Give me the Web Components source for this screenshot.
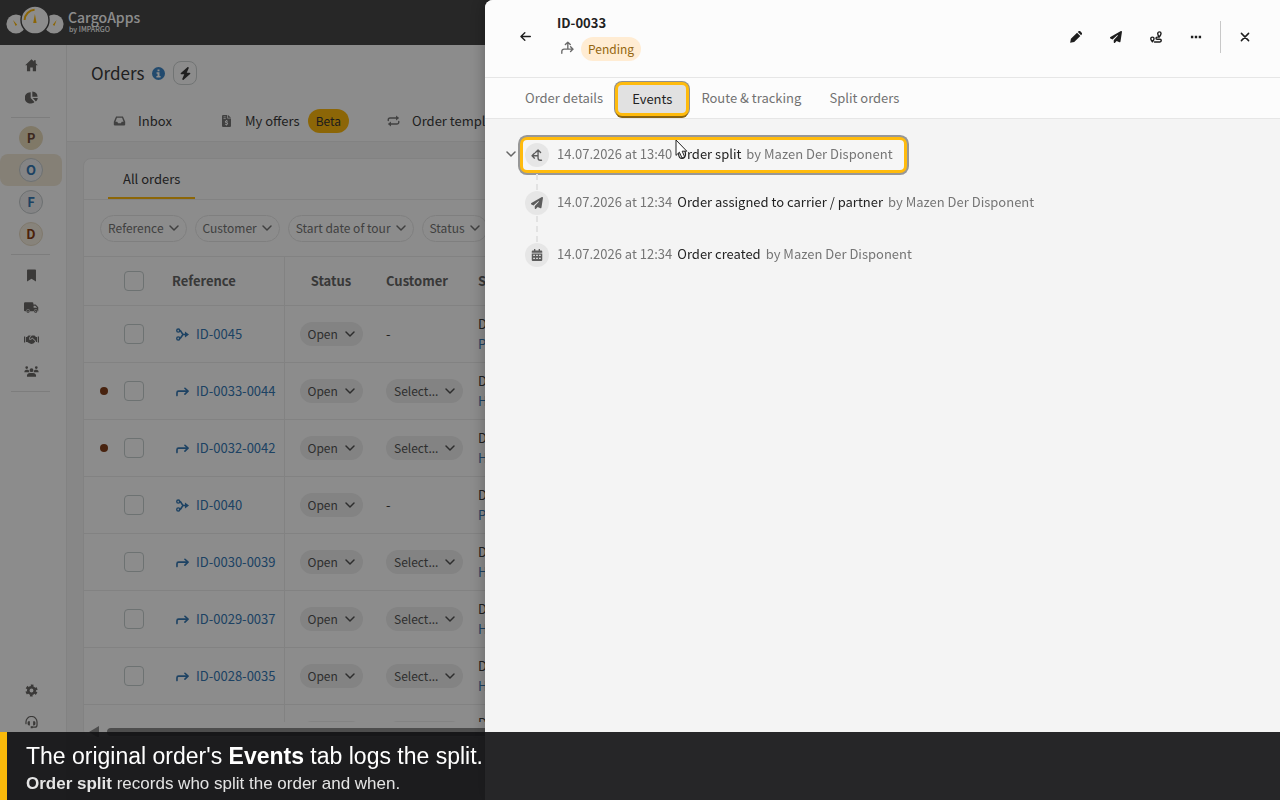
<!DOCTYPE html>
<html lang="en">
<head>
<meta charset="utf-8">
<title>CargoApps - Orders</title>
<style>
  html, body { height: 100%; }
  body {
    margin: 0;
    overflow: hidden;
    font: 13px/20px "Noto Sans CJK SC", "Noto Sans", sans-serif;
    --accent: #ffbb0d;
    --ink: #3b3b3b;
    --link: #3578b4;
    --line: #ededed;
    color: var(--ink);
  }
</style>
</head>
<body>
<cargo-app>
  <app-header slot="header"></app-header>
  <side-nav slot="nav"></side-nav>
  <orders-page slot="main"></orders-page>
  <order-drawer slot="drawer" order="ID-0033" status="Pending">
    <event-item icon="split" date="14.07.2026 at 13:40" author="Mazen Der Disponent" marked>Order split</event-item>
    <event-item icon="plane" date="14.07.2026 at 12:34" author="Mazen Der Disponent">Order assigned to carrier / partner</event-item>
    <event-item icon="calendar" date="14.07.2026 at 12:34" author="Mazen Der Disponent">Order created</event-item>
  </order-drawer>
  <caption-bar slot="caption">
    <span slot="title">The original order's <b>Events</b> tab logs the split.</span>
    <span><b>Order split</b> records who split the order and when.</span>
  </caption-bar>
</cargo-app>

<script>
const line = (d, w = 1.6) => `<path d="${d}" fill="none" stroke="currentColor" stroke-width="${w}" stroke-linecap="round" stroke-linejoin="round"/>`;
const fill = (d) => `<path d="${d}" fill="currentColor" fill-rule="evenodd"/>`;

const ICONS = {
  home: ["0 0 16 16", fill("M8 .4L.2 7.6H2.4V15H6.4V10.5H9.6V15H13.6V7.6H15.8L13.2 5.2V1.6H11V3.2Z")],
  pie: ["0 0 16 16", fill("M7 1.5V8.6L11.6 13.4A7 7 0 1 1 7 1.5ZM9 0.5A7 7 0 0 1 15.5 7H9ZM9.6 8.5H15.8A7 7 0 0 1 13.4 12.8Z")],
  bookmark: ["0 0 16 16", fill("M2.5 1.5A1 1 0 0 1 3.5 .5H12.5A1 1 0 0 1 13.5 1.5V15.5L8 12L2.5 15.5Z")],
  truck: ["0 0 20 16", fill("M1.5 1H11A1.5 1.5 0 0 1 12.5 2.5V4H15.5L19 7.5V13H18.2A2.6 2.6 0 0 0 13 13H8A2.6 2.6 0 0 0 2.8 13H1.5A1.5 1.5 0 0 1 0 11.5V2.5A1.5 1.5 0 0 1 1.5 1ZM12.8 5.6V8.4H17.3V8L14.9 5.6ZM5.4 10.9A2.1 2.1 0 1 1 5.4 15.1A2.1 2.1 0 0 1 5.4 10.9ZM5.4 12.2A.8.8 0 1 0 5.4 13.8A.8.8 0 0 0 5.4 12.2ZM15.6 10.9A2.1 2.1 0 1 1 15.6 15.1A2.1 2.1 0 0 1 15.6 10.9ZM15.6 12.2A.8.8 0 1 0 15.6 13.8A.8.8 0 0 0 15.6 12.2Z")],
  handshake: ["0 0 20 16", fill("M0 4H1.6V12H0ZM18.4 4H20V12H18.4ZM2.6 4.6H4L6 2.8H9L7 5.2V8.2H9.4L11 6.6L15.2 10.6L12.5 13.2L9.6 14L6.6 12.6L4.4 11.2H2.6ZM17.4 4.6H16L14 2.8H10.4L8.2 5.4V7.2H9L11 5.4L16 10V11.2H17.4Z")],
  people: ["0 0 20 16", fill("M3.6 1A1.8 1.8 0 1 1 3.6 4.6A1.8 1.8 0 0 1 3.6 1ZM16.4 1A1.8 1.8 0 1 1 16.4 4.6A1.8 1.8 0 0 1 16.4 1ZM10 3.6A2.6 2.6 0 1 1 10 8.8A2.6 2.6 0 0 1 10 3.6ZM2.6 5.6H5.2L6.4 6.4A4 4 0 0 0 7.4 9H0.4A3.4 3.4 0 0 1 2.6 5.6ZM17.4 5.6H14.8L13.6 6.4A4 4 0 0 1 12.6 9H19.6A3.4 3.4 0 0 0 17.4 5.6ZM8 10H12A4 4 0 0 1 16 15H4A4 4 0 0 1 8 10Z")],
  gear: ["0 0 16 16", `<circle cx="8" cy="8" r="4" fill="none" stroke="currentColor" stroke-width="3.2"/><circle cx="8" cy="8" r="6.2" fill="none" stroke="currentColor" stroke-width="2.6" stroke-dasharray="3.25 3.25" stroke-dashoffset="-1.6"/>`],
  headset: ["0 0 16 16", line("M1.2 9.4V7.4A6.8 6.8 0 0 1 14.8 7.4V11A2.8 2.8 0 0 1 12 13.8H8.5", 1.5) + fill("M4 6.4H6V11.6H5A1.8 1.8 0 0 1 3.2 9.8V8.2A1.8 1.8 0 0 1 4 6.4ZM12 6.4H10V11.6H11A1.8 1.8 0 0 0 12.8 9.8V8.2A1.8 1.8 0 0 0 12 6.4ZM7 12.6H9.5V15H7Z")],
  info: ["0 0 16 16", fill("M8 0A8 8 0 1 1 8 16A8 8 0 0 1 8 0ZM6.8 3V5.2H9.2V3ZM5.6 6.4V8.2H6.8V11.2H5.4V13H10.6V11.2H9.2V6.4Z")],
  bolt: ["0 0 448 512", fill("M349.4 44.6c5.9-13.7 1.5-29.7-10.6-38.5s-28.6-8-39.9 1.8l-256 224c-10 8.8-13.6 22.9-8.9 35.3S50.7 288 64 288H175.5L98.6 467.4c-5.9 13.7-1.5 29.7 10.6 38.5s28.6 8 39.9-1.8l256-224c10-8.8 13.6-22.9 8.9-35.3s-16.6-20.7-30-20.7H272.5L349.4 44.6z")],
  inbox: ["0 0 16 16", fill("M3.4 2H12.6L15.6 9V12.5A1.5 1.5 0 0 1 14.1 14H1.9A1.5 1.5 0 0 1 .4 12.5V9ZM4.6 3.8L2.6 9H5L6.2 11H9.8L11 9H13.4L11.4 3.8Z")],
  invoice: ["0 0 12 16", fill("M1.5 0H7V4.6H12V14.5A1.5 1.5 0 0 1 10.5 16H1.5A1.5 1.5 0 0 1 0 14.5V1.5A1.5 1.5 0 0 1 1.5 0ZM8 0L12 3.8H8ZM2 2V3H5V2ZM2 4V5H5V4ZM5.4 6.6V7.4C3.4 7.8 3.4 10.2 5.2 10.7L6.4 11.1C7 11.4 6.8 12 6 12L3.9 11.6V12.8L5.4 13.2V14H6.6V13.2C8.8 12.8 8.7 10.4 6.8 9.8L5.6 9.4C5 9.1 5.3 8.6 6 8.6L7.8 8.9V7.7L6.6 7.4V6.6Z")],
  repeat: ["0 0 16 16", line("M1 7.4V6.4A2.4 2.4 0 0 1 3.4 4H13", 1.9) + line("M15 8.6V9.6A2.4 2.4 0 0 1 12.6 12H3", 1.9) + fill("M11.4.6L15.6 4L11.4 7.4ZM4.6 8.6L.4 12L4.6 15.4Z")],
  chevron: ["0 0 12 12", line("M2 4L6 8L10 4", 1.5)],
  merge: ["0 0 16 16", line("M4.4 3.2C7.4 3.2 6.6 8 9.6 8H12M4.4 12.8C7.4 12.8 6.6 8 9.6 8", 2) + `<circle cx="2.8" cy="3.2" r="1.9" fill="none" stroke="currentColor" stroke-width="1.7"/><circle cx="2.8" cy="12.8" r="1.9" fill="none" stroke="currentColor" stroke-width="1.7"/>` + fill("M11 4.4L16 8L11 11.6Z")],
  turn: ["0 0 16 16", line("M1.2 13V9.6A2 2 0 0 1 3.2 7.6H14", 2) + line("M11 4L14.8 7.6L11 11.2", 2)],
  back: ["0 0 16 16", line("M15 8H1.8M7 2.4L1.4 8L7 13.6", 2)],
  branch: ["0 0 16 16", line("M1 15V12.8A2.8 2.8 0 0 1 3.8 10H14.8M11.8 7L14.8 10L11.8 13M8.4 10V1.6M5.4 4.4L8.4 1.4L11.4 4.4", 1.7)],
  split: ["0 0 16 16", line("M14 15H12.4A3 3 0 0 1 9.4 12V1.6M6 4.6L9.4 1.4L12.8 4.6M9 9H1.6M4.6 5.8L1.4 9L4.6 12.2", 1.8)],
  pencil: ["0 0 16 16", fill("M1.2 10.4L9.4 2.2L13.8 6.6L5.6 14.8L.2 15.8ZM10.4 1.2L11.4.4A1.8 1.8 0 0 1 13.8.4L15.6 2.2A1.8 1.8 0 0 1 15.6 4.6L14.8 5.6Z")],
  plane: ["0 0 512 512", fill("M498.1 5.6c10.1 7 15.4 19.1 13.5 31.2l-64 416c-1.5 9.7-7.4 18.2-16 23s-18.9 5.4-28 1.6L284 427.7l-68.5 74.1c-8.9 9.7-22.9 12.9-35.2 8.1S160 493.2 160 480V396.4c0-4 1.5-7.8 4.2-10.7L331.8 202.8c5.8-6.3 5.6-16-.4-22s-15.7-6.4-22-.7L106 360.8 17.7 316.6C7.1 311.3 .3 300.7 0 288.9s5.9-22.8 16.1-28.7l448-256c10.7-6.1 23.9-5.5 34 1.4z")],
  route: ["0 0 16 16", line("M12.4 8C11 6.4 10.3 5.2 10.3 3.4A2.2 2.2 0 0 1 14.7 3.4C14.7 5 13.8 6.4 12.4 8ZM3.2 14.4C1.8 12.8 1 11.8 1 10.4A2.2 2.2 0 0 1 5.4 10.4C5.4 11.8 4.6 12.8 3.2 14.4ZM11 8.2H9.4A1.4 1.4 0 0 0 9.4 11H13.2A1.7 1.7 0 0 1 13.2 14.6H6", 1.9)],
  dots: ["0 0 16 16", fill("M1.2 6.4H4.4V9.6H1.2ZM6.4 6.4H9.6V9.6H6.4ZM11.6 6.4H14.8V9.6H11.6Z")],
  close: ["0 0 16 16", line("M3.2 3.2L12.8 12.8M12.8 3.2L3.2 12.8", 2)],
  calendar: ["0 0 16 16", fill("M4 0H5.8V2H10.2V0H12V2H13.6A1.4 1.4 0 0 1 15 3.4V5H1V3.4A1.4 1.4 0 0 1 2.4 2H4ZM1 6H15V14.6A1.4 1.4 0 0 1 13.6 16H2.4A1.4 1.4 0 0 1 1 14.6ZM3 7.6V9.4H5.2V7.6ZM6.9 7.6V9.4H9.1V7.6ZM10.8 7.6V9.4H13V7.6ZM3 11.6V13.4H5.2V11.6ZM6.9 11.6V13.4H9.1V11.6ZM10.8 11.6V13.4H13V11.6Z")],
};

class UiIcon extends HTMLElement {
  connectedCallback() {
    const [box, body] = ICONS[this.getAttribute("name")];
    this.attachShadow({ mode: "open" }).innerHTML = `
      <style>
        :host { display: inline-block; width: 12px; height: 12px; flex: none; }
        svg { display: block; width: 100%; height: 100%; }
      </style>
      <svg viewBox="${box}" aria-hidden="true">${body}</svg>
    `;
  }
}
customElements.define("ui-icon", UiIcon);

class CargoApp extends HTMLElement {
  constructor() {
    super();
    this.attachShadow({ mode: "open" }).innerHTML = `
      <style>
        :host { display: flex; flex-direction: column; height: 100vh; }
        .body { display: flex; flex: 1; min-height: 0; }
        ::slotted([slot="main"]) { flex: 1; min-width: 0; }
        .backdrop { position: fixed; inset: 0; background: rgba(0, 0, 0, 0.45); }
      </style>
      <slot name="header"></slot>
      <div class="body">
        <slot name="nav"></slot>
        <slot name="main"></slot>
      </div>
      <div class="backdrop"></div>
      <slot name="drawer"></slot>
      <slot name="caption"></slot>
    `;
  }
}
customElements.define("cargo-app", CargoApp);

class AppHeader extends HTMLElement {
  constructor() {
    super();
    this.attachShadow({ mode: "open" }).innerHTML = `
      <style>
        :host { display: flex; align-items: center; gap: 4px; height: 45px; padding: 0 6px; box-sizing: border-box; background: #474747; color: #fff; }
        svg { width: 58px; height: 38px; }
        .brand { padding-bottom: 4px; }
        .name { font-size: 14px; line-height: 16px; font-weight: 500; }
        .by { font-size: 7px; line-height: 8px; padding-left: 1px; font-weight: 500; }
      </style>
      <svg viewBox="0 0 58 38" aria-hidden="true">
        <g fill="#fff">
          <circle cx="10" cy="20" r="9.6"/><circle cx="48" cy="20" r="9.6"/>
          <circle cx="29" cy="16" r="14" stroke="#474747" stroke-width="1.4"/>
        </g>
        <path d="M18.6 16A10.5 10.5 0 0 1 28.6 5.8" fill="none" stroke="#ffbb0d" stroke-width="2"/>
        <path d="M28.9 10L30.6 19H27.2ZM7 16L11.2 20.8L9.6 22ZM50.6 16L48.4 22L46.8 20.8Z" fill="#ffbb0d"/>
      </svg>
      <div class="brand">
        <div class="name">CargoApps</div>
        <div class="by">by IMPARGO</div>
      </div>
    `;
  }
}
customElements.define("app-header", AppHeader);

class SideNav extends HTMLElement {
  connectedCallback() {
    const link = (icon, label) => `<a href="#${icon}" aria-label="${label}"><ui-icon name="${icon}"></ui-icon></a>`;
    const wide = (icon, label) => `<a href="#${icon}" aria-label="${label}"><ui-icon class="wide" name="${icon}"></ui-icon></a>`;
    const board = (letter, cls) => `<a href="#${letter}" class="${cls}"><span>${letter}</span></a>`;

    this.attachShadow({ mode: "open" }).innerHTML = `
      <style>
        :host { display: flex; width: 66px; padding: 4px 0 62px; border-right: 1px solid var(--line); background: #fff; box-sizing: content-box; }
        nav { display: flex; flex-direction: column; width: 62px; }
        a { display: grid; place-content: center; height: 32px; border-radius: 8px; color: #6a6866; text-decoration: none; }
        ui-icon { width: 13px; height: 13px; }
        .wide { width: 15px; }
        hr { width: 39px; margin: 4px 11px; border: 0; border-top: 1px solid #e4e4e4; }
        span { display: grid; place-content: center; width: 22px; height: 22px; border: 1px solid #ccd4d4; border-radius: 50%; font-weight: 700; }
        .p span { background: #eadcbc; border-color: #eadcbc; color: #6e4a3a; }
        .o { background: #f2e9d8; }
        .o span, .f span { background: #f0f1f3; color: var(--link); border-color: #c6cccd; }
        .d span { background: #f6eee0; border-color: #e8dcc6; color: #8a3c12; }
        .end { margin-top: auto; }
      </style>
      <nav>
        ${link("home", "Home")}
        ${link("pie", "Dashboard")}
        <hr>
        ${board("P", "p")}
        ${board("O", "o")}
        ${board("F", "f")}
        ${board("D", "d")}
        <hr>
        ${link("bookmark", "Bookmarks")}
        ${wide("truck", "Fleet")}
        ${wide("handshake", "Partners")}
        ${wide("people", "Team")}
        <hr>
        <div class="end">
          ${link("gear", "Settings")}
          ${link("headset", "Support")}
        </div>
      </nav>
    `;
  }
}
customElements.define("side-nav", SideNav);

// drop-down in the shape of a pill
class PillSelect extends HTMLElement {
  connectedCallback() {
    const value = this.getAttribute("value");
    this.attachShadow({ mode: "open" }).innerHTML = `
      <style>
        :host { display: inline-grid; align-items: center; height: 24px; border-radius: 12px; background: #efefef; color: #555; vertical-align: middle; }
        select { grid-area: 1 / 1; appearance: none; height: 24px; margin: 0; padding: 0 24px 0 8px; border: 0; background: none; color: inherit; font: inherit; font-size: 12px; line-height: 24px; }
        ui-icon { grid-area: 1 / 1; justify-self: end; margin-right: 7px; pointer-events: none; }
      </style>
      <select aria-label="${this.getAttribute("label")}"><option>${value}</option></select>
      <ui-icon name="chevron"></ui-icon>
    `;
  }
}
customElements.define("pill-select", PillSelect);

class OrdersPage extends HTMLElement {
  connectedCallback() {
    const orders = [
      ["ID-0045", "merge"],
      ["ID-0033-0044", "turn", true],
      ["ID-0032-0042", "turn", true],
      ["ID-0040", "merge"],
      ["ID-0030-0039", "turn"],
      ["ID-0029-0037", "turn"],
      ["ID-0028-0035", "turn"],
      ["", "turn"],
    ];

    this.attachShadow({ mode: "open" }).innerHTML = `
      <style>
        :host { display: flex; flex-direction: column; background: #f6f6f6; }
        a { color: inherit; text-decoration: none; }
        .top { padding: 14px 24px 0; background: #fff; border-bottom: 1px solid var(--line); }
        h1 { display: flex; align-items: center; gap: 8px; height: 28px; margin: 0; font-size: 17px; font-weight: 400; }
        h1 ui-icon { width: 13px; height: 13px; color: #3f88c8; }
        .quick { display: grid; place-content: center; width: 24px; height: 24px; padding: 0; border: 1px solid #ced3d3; border-radius: 8px; background: #fff; color: var(--ink); }
        .quick ui-icon { color: inherit; }
        .sections { display: flex; gap: 38px; height: 32px; padding: 18px 22px 4px; align-items: center; white-space: nowrap; }
        .sections a { display: flex; align-items: center; gap: 12px; min-width: 69px; height: 24px; }
        .sections ui-icon { color: #777; width: 13px; }
        .beta { padding: 2px 8px; margin-left: -4px; border-radius: 12px; background: var(--accent); color: #333; font-size: 12px; }
        .card { flex: 1; min-height: 0; display: flex; flex-direction: column; margin: 16px 16px 62px; border: 1px solid var(--line); border-radius: 8px; background: #fff; overflow: hidden; }
        .views { flex: none; display: flex; height: 40px; padding: 0 24px; border-bottom: 1px solid var(--line); }
        .views a { padding: 10px 15px 8px; border-bottom: 2px solid var(--accent); }
        .filters { display: flex; gap: 8px; padding: 15px 16px 14px; }
        .filters button { flex: none; display: flex; align-items: center; gap: 4px; height: 27px; padding: 0 6px 2px 7px; border: 1px solid #e8e8e8; border-radius: 14px; background: #fff; color: #757575; font: inherit; font-size: 12px; }
        .scroll { flex: 1; min-height: 0; overflow: hidden; border-top: 1px solid var(--line); }
        table { table-layout: fixed; width: 100%; border-collapse: separate; border-spacing: 0; }
        th, td { padding: 0; height: 56px; border-bottom: 1px solid var(--line); text-align: left; }
        th { height: 48px; color: #666; font-weight: 700; }
        .dot { width: 40px; text-align: center; }
        .dot i { display: block; width: 8px; height: 8px; margin-left: 16px; border-radius: 50%; background: #84401c; }
        .pick { width: 48px; }
        .ref { width: 112px; border-right: 1px solid var(--line); }
        td.ref a { display: flex; align-items: center; gap: 7px; padding-left: 4px; color: var(--link); }
        .ref ui-icon { width: 13px; height: 13px; }
        .status { width: 92px; text-align: center; }
        .cust { width: 92px; padding-left: 9px; }
        .stop a { color: var(--link); }
        input { display: block; appearance: none; width: 20px; height: 20px; margin: 0; border: 1px solid #c6cfcf; border-radius: 4px; background: #fff; }
        .bar { flex: none; display: flex; align-items: center; gap: 8px; height: 15px; padding-left: 5px; }
        .bar i { border: 6px solid transparent; border-right: 10px solid #8c8c8c; border-left: 0; margin-top: 4px; }
        .bar b { flex: 1; height: 8px; margin-top: 4px; border-radius: 4px; background: #8c8c8c; }
      </style>
      <div class="top">
        <h1>Orders <ui-icon name="info"></ui-icon>
          <button class="quick" aria-label="Quick actions"><ui-icon name="bolt"></ui-icon></button>
        </h1>
        <nav class="sections">
          <a href="#inbox"><ui-icon name="inbox"></ui-icon>Inbox</a>
          <a href="#offers"><ui-icon name="invoice"></ui-icon>My offers <span class="beta">Beta</span></a>
          <a href="#templates"><ui-icon name="repeat"></ui-icon>Order templates</a>
        </nav>
      </div>
      <section class="card">
        <div class="views"><a href="#all">All orders</a></div>
        <div class="filters">
          ${["Reference", "Customer", "Start date of tour", "Status"].map((f) => `<button>${f}<ui-icon name="chevron"></ui-icon></button>`).join("")}
        </div>
        <div class="scroll">
          <table>
            <thead>
              <tr>
                <th class="dot"></th>
                <th class="pick"><input type="checkbox" aria-label="Select all orders"></th>
                <th class="ref">Reference</th>
                <th class="status">Status</th>
                <th class="cust">Customer</th>
                <th class="stop">Start</th>
              </tr>
            </thead>
            <tbody>
              ${orders.map(([id, icon, fresh]) => `
                <tr>
                  <td class="dot">${fresh ? "<i></i>" : ""}</td>
                  <td class="pick"><input type="checkbox" aria-label="Select ${id}"></td>
                  <td class="ref">${id ? `<a href="#${id}"><ui-icon name="${icon}"></ui-icon>${id}</a>` : ""}</td>
                  <td class="status"><pill-select label="Status of ${id}" value="Open"></pill-select></td>
                  <td class="cust">${icon === "merge" ? "-" : `<pill-select label="Customer of ${id}" value="Select..."></pill-select>`}</td>
                  <td class="stop">D<br>${id ? `<a href="#stop">${icon === "merge" ? "P" : "H"}</a>` : "&nbsp;"}</td>
                </tr>`).join("")}
            </tbody>
          </table>
        </div>
        <div class="bar"><i></i><b></b></div>
      </section>
    `;
  }
}
customElements.define("orders-page", OrdersPage);

class OrderDrawer extends HTMLElement {
  connectedCallback() {
    this.attachShadow({ mode: "open" }).innerHTML = `
      <style>
        :host { position: fixed; top: 0; right: 0; bottom: 0; left: 485px; display: flex; flex-direction: column; border-radius: 8px 0 0 0; background: #f4f4f4; color: #222; box-shadow: 0 0 16px rgba(0, 0, 0, 0.3); }
        header { display: flex; align-items: center; height: 77px; padding: 0 15px 4px 20px; box-sizing: border-box; border-radius: 8px 0 0 0; background: #fcfcfc; }
        button { display: grid; place-content: center; width: 40px; height: 40px; padding: 0; border: 0; background: none; color: #1e1e1e; font: inherit; }
        .title { flex: 1; padding: 0 12px; }
        h2 { margin: 0; font-size: 13px; line-height: 20px; font-weight: 700; }
        .state { display: flex; align-items: center; gap: 7px; height: 24px; margin: 4px 0 0 4px; color: #6a6a6a; }
        .state ui-icon { width: 13px; height: 13px; margin-bottom: 2px; }
        .pill { padding: 2px 7px; border-radius: 12px; background: #ffecd3; color: #93650f; font-size: 12px; }
        .rule { width: 1px; height: 32px; margin: 0 4px; background: #c8c8c8; }
        .tabs { display: flex; height: 42px; padding: 0 26px; box-sizing: border-box; border: solid #e6e6e6; border-width: 1px 0; background: #fcfcfc; }
        .tabs button { width: auto; padding: 0 14px; color: #727272; }
        .tabs .on { height: 28px; margin: 7px 1px; border-radius: 4px; background: #e1e1e1; color: #222; box-shadow: 0 0 0 3px var(--accent), 0 3px 0 2px #8a6410, 0 0 0 4px #8f8f8f; }
        .events { padding: 21px 20px; }
        .back ui-icon { width: 11px; height: 11px; }
      </style>
      <header>
        <button class="back" aria-label="Back"><ui-icon name="back"></ui-icon></button>
        <div class="title">
          <h2>${this.getAttribute("order")}</h2>
          <div class="state"><ui-icon name="branch"></ui-icon><span class="pill">${this.getAttribute("status")}</span></div>
        </div>
        <button aria-label="Edit"><ui-icon name="pencil"></ui-icon></button>
        <button aria-label="Send"><ui-icon name="plane"></ui-icon></button>
        <button aria-label="Route"><ui-icon name="route"></ui-icon></button>
        <button aria-label="More"><ui-icon name="dots"></ui-icon></button>
        <div class="rule"></div>
        <button aria-label="Close"><ui-icon name="close"></ui-icon></button>
      </header>
      <div class="tabs" role="tablist">
        <button role="tab">Order details</button>
        <button role="tab" class="on" aria-selected="true">Events</button>
        <button role="tab">Route &amp; tracking</button>
        <button role="tab">Split orders</button>
      </div>
      <div class="events"><slot></slot></div>
    `;
  }
}
customElements.define("order-drawer", OrderDrawer);

class EventItem extends HTMLElement {
  connectedCallback() {
    const marked = this.hasAttribute("marked");
    this.attachShadow({ mode: "open" }).innerHTML = `
      <style>
        :host { display: flex; align-items: center; gap: 1px; height: 30px; margin-bottom: 22px; color: #757575; white-space: nowrap; }
        :host([marked]) { margin-bottom: 18px; }
        .toggle { display: grid; place-content: center; width: 12px; height: 30px; padding: 0 0 3px; box-sizing: border-box; border: 0; background: none; color: #666; }
        .row { position: relative; display: flex; align-items: center; gap: 8px; height: 30px; padding: 0 11px 0 7px; border-radius: 4px; }
        .marked { background: #f6f6f6; box-shadow: 0 0 0 3px var(--accent), 0 0 0 5px #979797; margin-left: 5px; padding-left: 2px; }
        .circle { display: grid; place-content: center; width: 24px; height: 24px; border-radius: 50%; background: #e6e6e6; color: #5c5c5c; }
        .text { display: flex; gap: 5px; padding-bottom: 3px; }
        .what { color: #222; }
        .row::after { content: ""; position: absolute; left: 18px; top: 28px; width: 2px; height: 26px; background: repeating-linear-gradient(#e2e2e2 0 6px, transparent 6px 10px); }
        .marked::after { left: 13px; top: 34px; height: 16px; }
        :host(:last-of-type) .row::after { display: none; }
        .cursor { position: absolute; left: 152px; top: -1px; width: 14px; height: 20px; }
      </style>
      ${marked ? `<button class="toggle" aria-label="Collapse"><ui-icon name="chevron"></ui-icon></button>` : `<div class="toggle"></div>`}
      <div class="row ${marked ? "marked" : ""}">
        <span class="circle"><ui-icon name="${this.getAttribute("icon")}"></ui-icon></span>
        <span class="text"><span>${this.getAttribute("date")}</span> <span class="what"><slot></slot></span> <span>by ${this.getAttribute("author")}</span></span>
        ${marked ? `<svg class="cursor" viewBox="0 0 14 20" aria-hidden="true"><path d="M1 1V16.4L4.4 13.2L7 19L9.6 17.8L7.2 12.2H11.8Z" fill="#fff" stroke="#222"/></svg>` : ""}
      </div>
    `;
  }
}
customElements.define("event-item", EventItem);

class CaptionBar extends HTMLElement {
  constructor() {
    super();
    this.attachShadow({ mode: "open" }).innerHTML = `
      <style>
        :host { position: fixed; left: 0; right: 0; bottom: 0; display: block; height: 68px; padding: 9px 19px; box-sizing: border-box; border-left: 7px solid #fab90b; background: rgba(18, 18, 20, 0.91); color: #e4e4e4; font-family: "Liberation Sans", Arial, sans-serif; font-size: 17px; line-height: 26px; }
        .title { color: #fff; font-size: 23px; line-height: 30px; }
      </style>
      <div class="title"><slot name="title"></slot></div>
      <div><slot></slot></div>
    `;
  }
}
customElements.define("caption-bar", CaptionBar);
</script>
</body>
</html>
